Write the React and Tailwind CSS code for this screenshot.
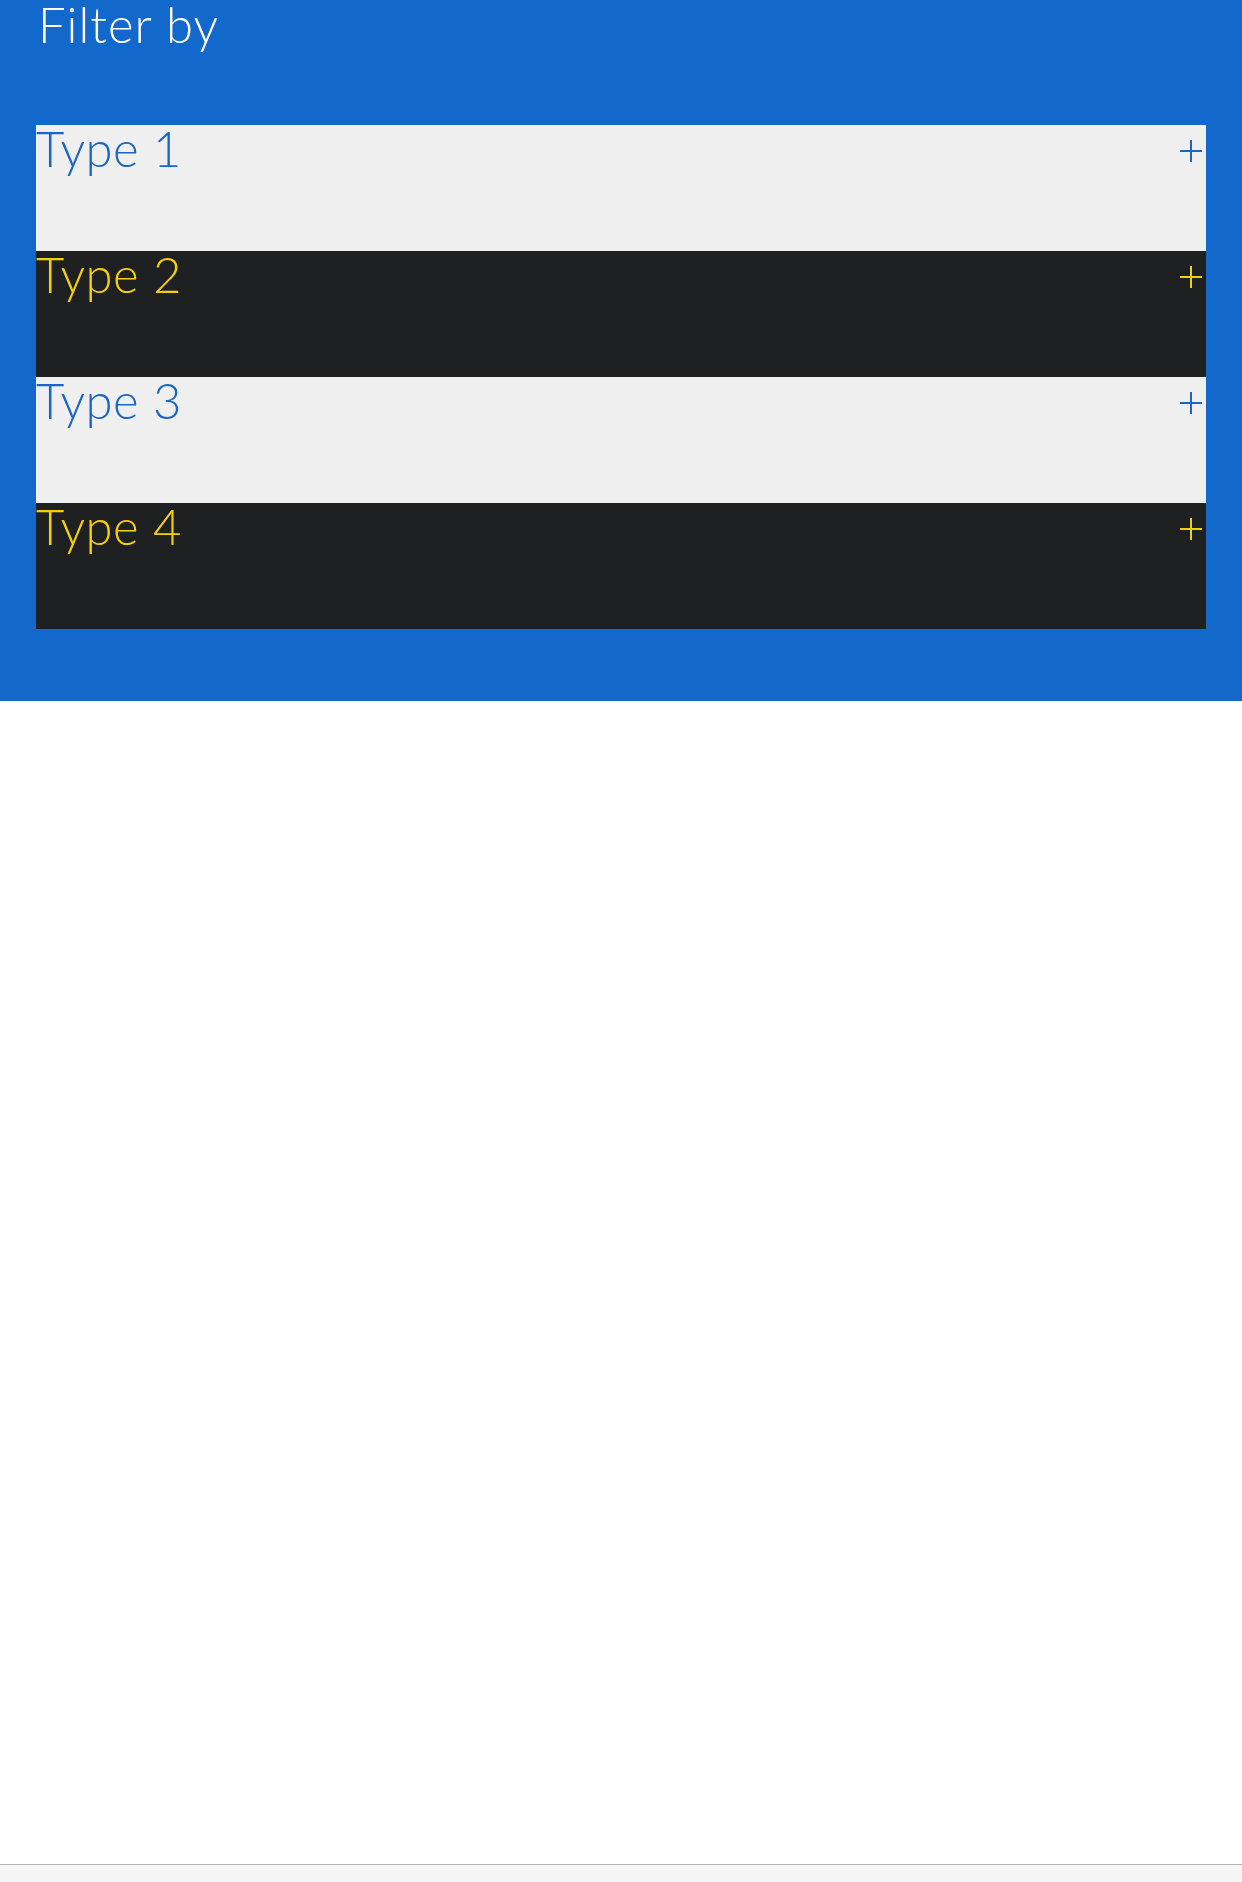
import { useState } from "react";

const types = [
  { id: 1, label: "Type 1", dark: false },
  { id: 2, label: "Type 2", dark: true },
  { id: 3, label: "Type 3", dark: false },
  { id: 4, label: "Type 4", dark: true },
];

function PlusIcon({ className }) {
  return (
    <svg viewBox="0 0 22 22" className={className} fill="none" stroke="currentColor" strokeWidth="2">
      <line x1="11" y1="0" x2="11" y2="22" />
      <line x1="0" y1="11" x2="22" y2="11" />
    </svg>
  );
}

function FilterRow({ item, open, onToggle }) {
  return (
    <button
      type="button"
      onClick={onToggle}
      className={`flex h-[126px] w-full items-start justify-between text-left ${
        item.dark ? "bg-[#1f2022] text-[#f5cf0a]" : "bg-[#efefef] text-[#1a66c4]"
      }`}
    >
      <span className="text-[49px] font-light leading-[46px] tracking-[0.5px]">{item.label}</span>
      <PlusIcon className={`mr-1 mt-[15px] h-[22px] w-[22px] ${open ? "rotate-45" : ""}`} />
    </button>
  );
}

export default function App() {
  const [openId, setOpenId] = useState(null);

  return (
    <div className="min-h-[1882px] bg-white font-['Lato',sans-serif] flex flex-col">
      <section className="bg-[#1368cc] px-9 pb-[72px] flex flex-col">
        <h2 className="text-[49px] font-light leading-[48px] text-white pl-[2px] tracking-[1px]">Filter by</h2>
        <div className="mt-[77px] flex flex-col">
          {types.map((item) => (
            <FilterRow
              key={item.id}
              item={item}
              open={openId === item.id}
              onToggle={() => setOpenId(openId === item.id ? null : item.id)}
            />
          ))}
        </div>
      </section>
      <div className="flex-1" />
      <div className="h-[18px] border-t border-[#b3b3b3] bg-[#f5f5f5]" />
    </div>
  );
}
